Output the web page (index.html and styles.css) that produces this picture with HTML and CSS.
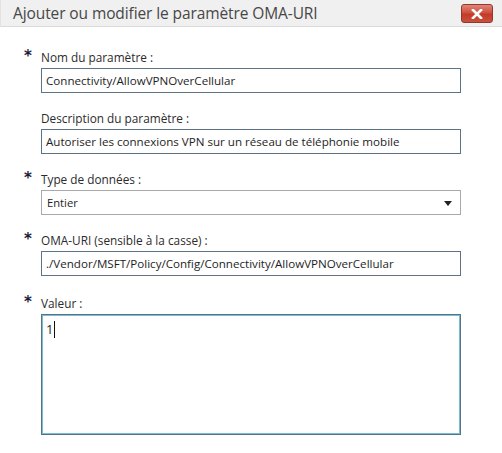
FILE: index.html
```html
<!DOCTYPE html>
<html lang="fr">
<head>
<meta charset="utf-8">
<title>Ajouter ou modifier le paramètre OMA-URI</title>
<link rel="stylesheet" href="styles.css">
</head>
<body>
<div class="dialog">
  <div class="titlebar">
    <span class="title">Ajouter ou modifier le paramètre OMA-URI</span>
    <button class="close" aria-label="Fermer">
      <svg width="12" height="10" viewBox="0 0 12 10"><path d="M2 1 L10 9 M10 1 L2 9" stroke="#fff" stroke-width="2.6" stroke-linecap="square"/></svg>
    </button>
  </div>
  <div class="form">
    <div class="field">
      <div class="label-row"><span class="req">*</span><span class="label">Nom du paramètre :</span></div>
      <div class="box input">Connectivity/AllowVPNOverCellular</div>
    </div>
    <div class="field">
      <div class="label-row"><span class="req"></span><span class="label">Description du paramètre :</span></div>
      <div class="box input">Autoriser les connexions VPN sur un réseau de téléphonie mobile</div>
    </div>
    <div class="field">
      <div class="label-row"><span class="req">*</span><span class="label">Type de données :</span></div>
      <div class="box select"><span class="sel-text">Entier</span><span class="arrow"></span></div>
    </div>
    <div class="field">
      <div class="label-row"><span class="req">*</span><span class="label">OMA-URI (sensible à la casse) :</span></div>
      <div class="box input">./Vendor/MSFT/Policy/Config/Connectivity/AllowVPNOverCellular</div>
    </div>
    <div class="field last">
      <div class="label-row"><span class="req">*</span><span class="label">Valeur :</span></div>
      <div class="box textarea"><span class="val">1</span><span class="caret"></span></div>
    </div>
  </div>
</div>
</body>
</html>
```
FILE: styles.css
```css
html, body {
  margin: 0;
  padding: 0;
  background: #fff;
}
body {
  font-family: "Open Sans", "Noto Sans", sans-serif;
  color: #222;
  width: 502px;
  height: 453px;
  overflow: hidden;
}
.dialog {
  display: flex;
  flex-direction: column;
}
.titlebar {
  height: 27px;
  background: #f0f0f0;
  border-bottom: 1px solid #dadada;
  border-left: 1px solid #e2e2e2;
  display: flex;
  align-items: center;
  justify-content: space-between;
  padding: 0 9px 0 12px;
  box-sizing: border-box;
}
.title {
  font-size: 15.5px;
  color: #474747;
  letter-spacing: -0.1px;
}
.close {
  width: 32px;
  height: 19px;
  margin-top: 1px;
  border: 1px solid #8f3a2f;
  border-radius: 3px;
  background: linear-gradient(#e0867a 0%, #d0503f 45%, #c43a28 55%, #c9523f 100%);
  display: flex;
  align-items: center;
  justify-content: center;
  padding: 0;
}
.form {
  display: flex;
  flex-direction: column;
  gap: 17px;
  padding: 22px 0 0 24px;
}
.field {
  display: flex;
  flex-direction: column;
}
.field.last {
  margin-top: 2px;
}
.label-row {
  display: flex;
  align-items: flex-start;
  height: 19px;
}
.req {
  width: 17px;
  font-family: "DejaVu Sans", sans-serif;
  font-weight: bold;
  font-size: 15px;
  line-height: 15px;
  color: #1b1b36;
}
.label {
  font-size: 11.8px;
  line-height: 17px;
  color: #2b2b2b;
}
.box {
  width: 420px;
  margin-left: 17px;
  box-sizing: border-box;
  height: 25px;
  font-size: 11.6px;
  color: #1e1e1e;
  display: flex;
  align-items: center;
  padding: 0 4px;
  white-space: nowrap;
}
.input {
  border: 1px solid #5d7285;
}
.select {
  border: 1px solid #a9a9a9;
  justify-content: space-between;
  padding: 0 8px 0 5px;
  font-size: 11.2px;
}
.arrow {
  width: 0;
  height: 0;
  border-left: 4px solid transparent;
  border-right: 4px solid transparent;
  border-top: 5px solid #222;
  margin-top: 2px;
}
.textarea {
  height: 121px;
  border: 1px solid #5a7083;
  box-shadow: inset 0 0 0 1px #72c0d4;
  align-items: flex-start;
  padding: 6px 4px;
  font-size: 13px;
}
.val {
  line-height: 16px;
}
.caret {
  width: 1px;
  height: 17px;
  background: #111;
  margin-left: 1px;
}
```
